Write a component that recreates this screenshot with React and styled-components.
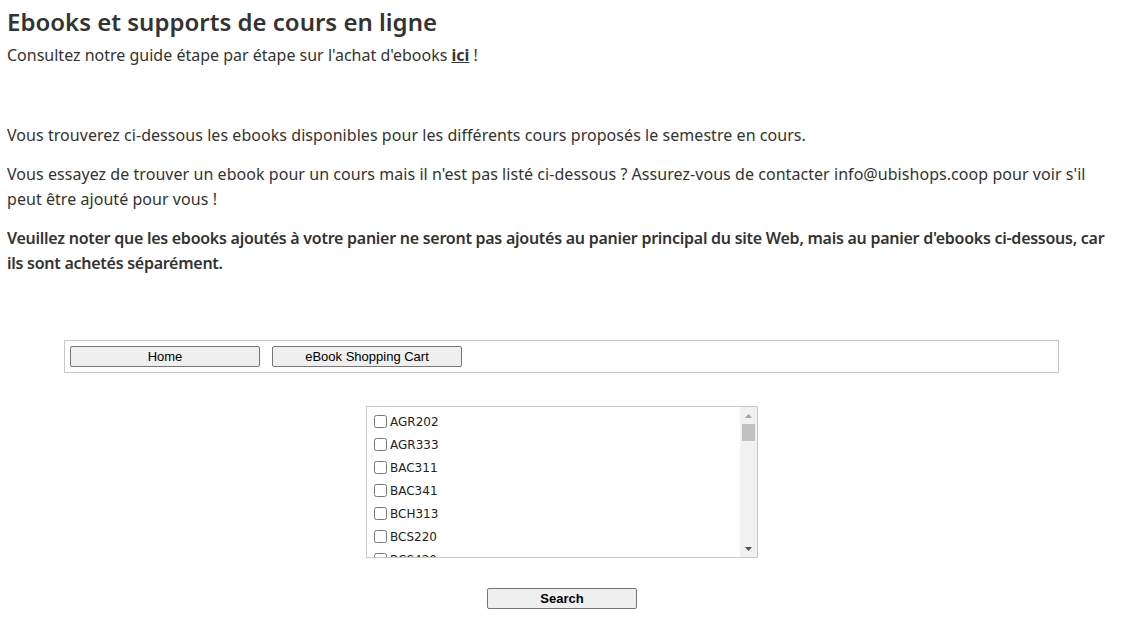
import React from 'react';
import styled, { createGlobalStyle } from 'styled-components';

const Global = createGlobalStyle`
  html, body { margin: 0; padding: 0; background: #fff; }
  body { font-family: "Noto Sans", "Open Sans", sans-serif; color: #333; }
`;

const Page = styled.div`
  padding: 6px 7px 0 7px;
`;

const Title = styled.h1`
  margin: 0;
  font-size: 24px;
  line-height: 32px;
  font-weight: 600;
  color: #333;
`;

const Lead = styled.p`
  margin: 5px 0 0 0;
  font-size: 16px;
  line-height: 24px;
  a { color: #333; font-weight: 700; text-decoration: underline; }
`;

const Intro = styled.div`
  margin-top: 56px;
  width: 1110px;
`;

const Para = styled.p`
  margin: 0 0 14px 0;
  font-size: 16px;
  line-height: 25px;
  font-weight: ${p => (p.bold ? 600 : 400)};
  letter-spacing: ${p => (p.bold ? '-0.26px' : '0.05px')};
`;

const NavBar = styled.div`
  margin: 64px 0 0 57px;
  width: 983px;
  height: 31px;
  border: 1px solid #c8c8c8;
  display: flex;
  align-items: center;
  gap: 12px;
  padding: 0 5px;
`;

const NavButton = styled.button`
  width: 190px;
  height: 21px;
  padding: 0;
  border: 1px solid #767676;
  border-radius: 2px;
  background: #efefef;
  font-family: "Liberation Sans", Arial, sans-serif;
  font-size: 13px;
  color: #000;
`;

const Center = styled.div`
  display: flex;
  flex-direction: column;
  align-items: center;
  padding-left: 2px;
`;

const ListBox = styled.div`
  margin-top: 33px;
  width: 392px;
  height: 152px;
  box-sizing: border-box;
  border: 1px solid #c8c8c8;
  display: flex;
`;

const ListScroll = styled.div`
  flex: 1;
  overflow: hidden;
  padding-top: 3px;
`;

const Track = styled.div`
  width: 17px;
  background: #f1f1f1;
  display: flex;
  flex-direction: column;
  align-items: center;
`;

const Arrow = styled.div`
  height: 17px;
  display: flex;
  align-items: center;
  justify-content: center;
`;

const Thumb = styled.div`
  width: 13px;
  height: 17px;
  background: #c1c1c1;
`;

const Spacer = styled.div`
  flex: 1;
`;

const Item = styled.label`
  display: flex;
  align-items: center;
  height: 23px;
  padding-left: 7px;
  font-family: "DejaVu Sans", Verdana, sans-serif;
  font-size: 12px;
  color: #222;
  input { margin: 0 3px 0 0; width: 13px; height: 13px; }
`;

const SearchButton = styled(NavButton)`
  margin-top: 30px;
  width: 150px;
  font-weight: 700;
`;

const courses = [
  'AGR202', 'AGR333', 'BAC311', 'BAC341', 'BCH313', 'BCS220', 'BCS420',
];

export default function App() {
  return (
    <Page>
      <Global />
      <Title>Ebooks et supports de cours en ligne</Title>
      <Lead>
        Consultez notre guide étape par étape sur l'achat d'ebooks <a href="#">ici</a> !
      </Lead>
      <Intro>
        <Para>Vous trouverez ci-dessous les ebooks disponibles pour les différents cours proposés le semestre en cours.</Para>
        <Para>Vous essayez de trouver un ebook pour un cours mais il n'est pas listé ci-dessous ? Assurez-vous de contacter info@ubishops.coop pour voir s'il peut être ajouté pour vous !</Para>
        <Para bold>Veuillez noter que les ebooks ajoutés à votre panier ne seront pas ajoutés au panier principal du site Web, mais au panier d'ebooks ci-dessous, car ils sont achetés séparément.</Para>
      </Intro>
      <NavBar>
        <NavButton>Home</NavButton>
        <NavButton>eBook Shopping Cart</NavButton>
      </NavBar>
      <Center>
        <ListBox>
          <ListScroll>
            {courses.map(c => (
              <Item key={c}>
                <input type="checkbox" />
                {c}
              </Item>
            ))}
          </ListScroll>
          <Track>
            <Arrow>
              <svg width="7" height="4" viewBox="0 0 7 4"><path d="M3.5 0L7 4H0z" fill="#a3a3a3" /></svg>
            </Arrow>
            <Thumb />
            <Spacer />
            <Arrow>
              <svg width="7" height="4" viewBox="0 0 7 4"><path d="M0 0h7L3.5 4z" fill="#505050" /></svg>
            </Arrow>
          </Track>
        </ListBox>
        <SearchButton>Search</SearchButton>
      </Center>
    </Page>
  );
}
